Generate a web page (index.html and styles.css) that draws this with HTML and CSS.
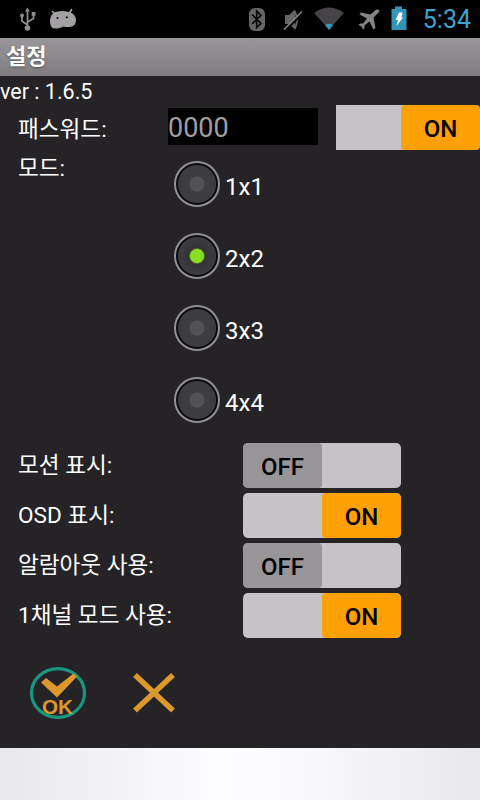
FILE: index.html
```
<!DOCTYPE html>
<html lang="ko">
<head>
    <meta charset="UTF-8">
    <meta name="viewport" content="width=device-width, initial-scale=1.0">
    <title>설정</title>
    <link rel="stylesheet" href="styles.css">
</head>
<body>
    <!-- Status bar -->
    <div class="status-bar">
        <svg class="status-icons" width="480" height="38" viewBox="0 0 480 38">
            <!-- USB -->
            <g fill="none" stroke="#8d8b8e" stroke-width="1.8">
                <path d="M27.5 11V27M27.5 25L22 21V16M27.5 22L33.5 18.5V14"/>
            </g>
            <g fill="#8d8b8e">
                <path d="M27.5 7.5L30 11.5H25Z"/>
                <circle cx="27.5" cy="28" r="2.8"/>
                <circle cx="22" cy="15.5" r="2"/>
                <rect x="31.7" y="12" width="3.8" height="3.8"/>
            </g>
            <!-- Debug droid -->
            <path fill="#a3a1a4" d="M54 12.5Q62 9.5 71 12.5Q76 15.5 76 20Q76 27 69 27Q66 27 63 26.5Q60 29 55 28.5Q50 28 50 21.5Q50 15.5 54 12.5Z"/>
            <path stroke="#a3a1a4" stroke-width="1.6" stroke-linecap="round" d="M55 14L52.5 11.5M69.5 13L71.5 9.5"/>
            <circle cx="57.5" cy="18" r="1" fill="#000"/>
            <circle cx="66.8" cy="17.3" r="1" fill="#000"/>
            <!-- Bluetooth -->
            <rect x="249" y="8" width="16" height="23" rx="6" fill="#666467"/>
            <path fill="none" stroke="#08070a" stroke-width="1.7" d="M252 14.5L261 23.5L256.7 27.5V11L261 15.5L252 24"/>
            <!-- Muted speaker -->
            <path fill="#666467" d="M285 15H289L295 9.5V29.5L289 24H285Z"/>
            <path fill="none" stroke="#666467" stroke-width="2" d="M294.5 11Q299.5 20 294.5 29"/>
            <path stroke="#000" stroke-width="2" d="M286 30L303.5 12.5"/>
            <path stroke="#858386" stroke-width="1.6" d="M284 29.5L302 11.5"/>
            <!-- Wifi -->
            <path fill="#454346" d="M314 13Q329 2 344 13L329 29.5Z"/>
            <path fill="#3498bd" d="M325 25Q329 22.5 333 25L329 30Z"/>
            <!-- Airplane -->
            <path fill="#858386" d="M378 9.5Q380 10 379 12L373.5 17.5L375.5 28L373.5 29.5L369.5 21.5L364.5 25.5L364.5 28.5L363 29.5L361.5 26.5L358.5 25L360 23.5L363 23.5L367 18.5L359.5 14.5L361 12.5L370.5 14.5L376 9.8Z"/>
            <!-- Battery -->
            <path fill="#3294b6" d="M395 6.5H402V9H406.5V30H391.5V9H395Z"/>
            <path fill="#fff" d="M399 12.5H402.5L401.5 17.5H403L396.5 26L398 20H395.5Z"/>
        </svg>
        <span class="clock">5:34</span>
    </div>

    <h1 class="title-bar">설정</h1>

    <main class="settings">
        <p class="version">ver : 1.6.5</p>

        <div class="password-row">
            <label class="label" for="password">패스워드:</label>
            <input id="password" class="password" type="text" value="0000">
            <div class="toggle toggle-cut on"><span class="toggle-thumb">ON</span></div>
        </div>

        <div class="mode-row">
            <span class="label">모드:</span>
            <div class="radio-group">
                <div class="radio"><i class="radio-dot"></i><span class="radio-text">1x1</span></div>
                <div class="radio checked"><i class="radio-dot"></i><span class="radio-text">2x2</span></div>
                <div class="radio"><i class="radio-dot"></i><span class="radio-text">3x3</span></div>
                <div class="radio"><i class="radio-dot"></i><span class="radio-text">4x4</span></div>
            </div>
        </div>

        <div class="switch-list">
            <div class="switch-row">
                <span class="label">모션 표시:</span>
                <div class="toggle"><span class="toggle-thumb">OFF</span></div>
            </div>
            <div class="switch-row">
                <span class="label">OSD 표시:</span>
                <div class="toggle on"><span class="toggle-thumb">ON</span></div>
            </div>
            <div class="switch-row">
                <span class="label">알람아웃 사용:</span>
                <div class="toggle"><span class="toggle-thumb">OFF</span></div>
            </div>
            <div class="switch-row">
                <span class="label">1채널 모드 사용:</span>
                <div class="toggle on"><span class="toggle-thumb">ON</span></div>
            </div>
        </div>

        <div class="actions">
            <svg width="60" height="56" viewBox="0 0 60 56">
                <ellipse cx="30" cy="28" rx="26.5" ry="24.4" fill="none" stroke="#19967d" stroke-width="3.2"/>
                <path fill="#dc982b" d="M13 17.5L18 13L29 21.5L45.5 8.5L49 11.5L29 32.5Z"/>
                <text class="ok-text" x="29.5" y="49" text-anchor="middle" textLength="31" lengthAdjust="spacingAndGlyphs">OK</text>
            </svg>
            <svg width="44" height="44" viewBox="0 0 44 44">
                <path stroke="#dc982b" stroke-width="5.5" d="M3 4L41 39.5M41 4L3 39.5"/>
            </svg>
        </div>
    </main>

    <footer class="footer"></footer>
</body>
</html>
```

FILE: styles.css
```
* {
    box-sizing: border-box;
}

body {
    margin: 0;
    width: 480px;
    height: 800px;
    display: flex;
    flex-direction: column;
    overflow: hidden;
    background: #252326;
    color: #fff;
    font-family: Roboto, "Noto Sans CJK KR", sans-serif;
    font-size: 24px;
}

/* Status bar */
.status-bar {
    position: relative;
    height: 38px;
    display: flex;
    justify-content: flex-end;
    padding-right: 9px;
    background: #000;
}

.status-icons {
    position: absolute;
    top: 0;
    left: 0;
}

.clock {
    font-size: 25px;
    line-height: 40px;
    color: #3ca4cf;
}

.title-bar {
    height: 38px;
    margin: 0;
    padding-left: 6px;
    background: linear-gradient(#989699, #7f7d80);
    font-size: 22px;
    font-weight: bold;
    line-height: 37px;
    text-shadow: 0 1px 2px rgba(0, 0, 0, 0.4);
}

/* Settings panel */
.settings {
    height: 672px;
}

.version {
    height: 29px;
    margin: 0;
    font-size: 21.5px;
    line-height: 32px;
}

.label {
    padding-left: 18px;
    font-size: 22.6px;
    line-height: 45px;
}

.password-row {
    display: grid;
    grid-template-columns: 168px 168px 144px;
    height: 45px;
}

.password-row .label {
    line-height: 50px;
}

.password {
    width: 150px;
    height: 37px;
    margin: 3px 0 0;
    padding: 2px 0 0;
    border: 0;
    background: #000;
    color: #a09ea1;
    font-family: Roboto, sans-serif;
    font-size: 27px;
}

/* Mode */
.mode-row {
    display: grid;
    grid-template-columns: 173px 1fr;
    height: 293px;
}

.mode-row .label {
    line-height: 38px;
}

.radio-group {
    padding-top: 10px;
}

.radio {
    display: flex;
    align-items: center;
    gap: 5px;
    height: 48px;
    margin-bottom: 24px;
}

.radio-dot {
    flex: none;
    width: 46px;
    height: 46px;
    margin: 0 0 0 1px;
    border: 2px solid #949295;
    border-radius: 50%;
    background: radial-gradient(circle at center, #535254 7px, #3d3c3e 8px, #3d3c3e 18.5px, #0a090b 19.5px);
}

.radio.checked .radio-dot {
    background: radial-gradient(circle at center, #8bdd20 6.5px, #343335 8px, #3d3c3e 18.5px, #0a090b 19.5px);
}

.radio-text {
    padding-top: 6px;
}

/* Toggles */
.switch-list {
    display: flex;
    flex-direction: column;
    gap: 5px;
}

.switch-row {
    display: grid;
    grid-template-columns: 243px 158px;
    height: 45px;
}

.toggle {
    display: flex;
    height: 45px;
    border-radius: 5px;
    background: #c5c3c6;
    overflow: hidden;
}

.toggle.on {
    justify-content: flex-end;
}

/* The switch runs into the screen edge, so its track ends under the thumb */
.toggle-cut.on {
    border-radius: 0;
    background: linear-gradient(90deg, #c5c3c6 75px, #252326 75px);
}

.toggle-thumb {
    width: 79px;
    border-radius: 4px;
    background: #979598;
    color: #000;
    font-size: 24px;
    font-weight: 500;
    line-height: 48px;
    text-align: center;
}

.on .toggle-thumb {
    background: #ffa005;
}

/* OK and cancel */
.actions {
    display: flex;
    align-items: center;
    gap: 44px;
    padding: 27px 0 0 28px;
}

.ok-text {
    fill: #dc982b;
    font-family: "Liberation Sans", sans-serif;
    font-size: 20px;
    font-weight: bold;
}

.footer {
    height: 52px;
    background: linear-gradient(90deg, #e8e7e9, #fdfcfe 45%, #fbfafc 60%, #e8e7e9);
}
```
